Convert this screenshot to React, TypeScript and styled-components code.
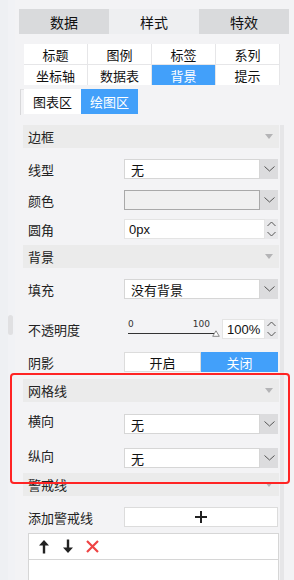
import React from 'react';
import styled, { createGlobalStyle } from 'styled-components';

const GlobalStyle = createGlobalStyle`
  html, body {
    margin: 0;
    padding: 0;
    overflow: hidden;
    background: #f3f3f5;
  }
  body {
    font-family: "Noto Sans CJK SC", "Noto Sans", sans-serif;
    font-size: 13px;
    color: #222;
  }
`;

const BLUE = '#42a0fa';

const Page = styled.div`
  position: relative;
  display: flex;
  width: 294px;
  height: 580px;
  overflow: hidden;
`;

const Gutter = styled.div`
  width: 15px;
  flex: none;
  background: linear-gradient(to right, #eef0f3 0 8px, #f1f2f5 8px);
  padding-top: 315px;
  box-sizing: border-box;
`;

const Thumb = styled.div`
  width: 5px;
  height: 20px;
  margin-left: 8px;
  border-radius: 3px;
  background: #e0e0e2;
`;

const Main = styled.div`
  flex: 1;
  padding-top: 9px;
`;

const TopTabs = styled.div`
  display: grid;
  grid-template-columns: repeat(3, 90px);
  margin-left: 4px;
  height: 25px;
`;

const TopTab = styled.div<{ $active?: boolean }>`
  display: flex;
  align-items: center;
  justify-content: center;
  font-size: 14px;
  color: #111;
  background: ${(p) => (p.$active ? '#eeeff1' : '#d9dadc')};
`;

const SubTabs = styled.div`
  display: grid;
  grid-template-columns: repeat(4, 63px);
  grid-auto-rows: 20px;
  gap: 1px;
  margin: 10px 0 0 9px;
  width: 256px;
  background: #e6e6e8;
`;

const SubTab = styled.div<{ $active?: boolean }>`
  display: flex;
  align-items: center;
  justify-content: center;
  background: ${(p) => (p.$active ? BLUE : '#fff')};
  color: ${(p) => (p.$active ? '#fff' : '#111')};
`;

const AreaTabs = styled.div`
  display: flex;
  margin: 4px 0 0 5px;
  height: 25px;
  padding-left: 3px;
  border-left: 1px solid #d8d8da;
  border-top: 1px solid #e2e2e4;
  width: 2px;
  box-sizing: content-box;
  overflow: visible;
`;

const AreaTab = styled.div<{ $active?: boolean }>`
  flex: none;
  width: 57px;
  height: 25px;
  margin-top: -1px;
  display: flex;
  align-items: center;
  justify-content: center;
  font-size: 13px;
  background: ${(p) => (p.$active ? BLUE : '#fff')};
  color: ${(p) => (p.$active ? '#fff' : '#111')};
`;

const PanelWrap = styled.div`
  display: flex;
  margin: 10px 0 0 8px;
`;

const Panel = styled.div`
  width: 256px;
  flex: none;
`;

const PanelScroll = styled.div`
  width: 4px;
  margin-left: 1px;
  height: 470px;
  background: #e6e6e8;
`;

const SectionHeader = styled.div<{ $top?: number }>`
  display: flex;
  align-items: center;
  justify-content: space-between;
  height: 23px;
  margin-top: ${(p) => p.$top ?? 0}px;
  padding: 0 5px;
  background: #ebebeb;
  color: #222;
  font-size: 13px;
`;

const Caret = styled.span`
  width: 0;
  height: 0;
  border-left: 4px solid transparent;
  border-right: 4px solid transparent;
  border-top: 5px solid #b4b4b6;
  margin-right: 1px;
`;

const Row = styled.div<{ $top: number }>`
  display: flex;
  align-items: center;
  height: 20px;
  margin-top: ${(p) => p.$top}px;
`;

const Label = styled.div<{ $raise?: number }>`
  width: 96px;
  padding-left: 5px;
  flex: none;
  font-size: 13px;
  color: #222;
  position: relative;
  top: ${(p) => -(p.$raise ?? 0)}px;
`;

const Control = styled.div`
  display: flex;
  width: 154px;
  height: 20px;
  flex: none;
`;

const SelectBox = styled.div<{ $blank?: boolean }>`
  flex: 1;
  display: flex;
  align-items: center;
  padding-left: 6px;
  box-sizing: border-box;
  background: ${(p) => (p.$blank ? '#f0f0f0' : '#fff')};
  border: 1px solid ${(p) => (p.$blank ? '#a9a9a9' : '#d6d6d6')};
  font-size: 13px;
  color: #111;
`;

const ArrowBtn = styled.div`
  width: 18px;
  flex: none;
  display: flex;
  align-items: center;
  justify-content: center;
  background: #dcdcde;
`;

const Spinner = styled.div`
  width: 13px;
  flex: none;
  display: flex;
  flex-direction: column;
  align-items: center;
  justify-content: space-between;
  padding: 2px 0 2px 0;
  box-sizing: border-box;
  background: #e8e8ea;
`;

const NumBox = styled.div<{ $width?: number }>`
  ${(p) => (p.$width ? `width: ${p.$width}px; flex: none;` : 'flex: 1;')}
  display: flex;
  align-items: center;
  padding-left: 4px;
  box-sizing: border-box;
  background: #fff;
  border: 1px solid #e4e4e4;
  font-family: "Liberation Sans", Arial, sans-serif;
  font-size: 13px;
  color: #111;
`;

const Slider = styled.div`
  width: 98px;
  flex: none;
  display: flex;
  flex-direction: column;
  padding-left: 4px;
  box-sizing: border-box;
`;

const SliderScale = styled.div`
  display: flex;
  justify-content: space-between;
  width: 82px;
  font-family: "DejaVu Sans", sans-serif;
  font-size: 9px;
  line-height: 10px;
  color: #333;
`;

const SliderTrack = styled.div`
  display: flex;
  align-items: flex-end;
  height: 8px;
`;

const SliderLine = styled.div`
  width: 86px;
  height: 1px;
  background: #333;
  margin-bottom: 3px;
`;

const Toggle = styled.div<{ $on?: boolean }>`
  flex: 1;
  display: flex;
  align-items: center;
  justify-content: center;
  font-size: 13px;
  background: ${(p) => (p.$on ? BLUE : '#fff')};
  color: ${(p) => (p.$on ? '#fff' : '#111')};
  border: 1px solid ${(p) => (p.$on ? BLUE : '#dcdcdc')};
`;

const AddBtn = styled.div`
  width: 154px;
  height: 20px;
  flex: none;
  display: flex;
  align-items: center;
  justify-content: center;
  box-sizing: border-box;
  background: #fff;
  border: 1px solid #dcdcdc;
`;

const LineTable = styled.div`
  margin: 6px 0 0 5px;
  height: 80px;
  background: #fff;
  border: 1px solid #d6d6d6;
`;

const LineToolbar = styled.div`
  display: flex;
  align-items: center;
  gap: 12px;
  height: 25px;
  padding-left: 9px;
  border-bottom: 1px solid #d6d6d6;
`;

const Highlight = styled.div`
  position: absolute;
  left: 10px;
  top: 373px;
  width: 280px;
  height: 111px;
  box-sizing: border-box;
  border: 2px solid #ff2424;
  border-radius: 4px;
  pointer-events: none;
`;

const Chevron = ({ up }: { up?: boolean }) => (
  <svg width="9" height="6" viewBox="0 0 9 6">
    <path
      d={up ? 'M0.5 5 L4.5 1 L8.5 5' : 'M0.5 1 L4.5 5 L8.5 1'}
      fill="none"
      stroke="#555"
      strokeWidth="1"
    />
  </svg>
);

const DownArrowBtn = () => (
  <ArrowBtn>
    <svg width="11" height="6" viewBox="0 0 11 6">
      <path d="M0.5 0.5 L5.5 5 L10.5 0.5" fill="none" stroke="#555" strokeWidth="1" />
    </svg>
  </ArrowBtn>
);

const Select = ({ value, blank }: { value?: string; blank?: boolean }) => (
  <Control>
    <SelectBox $blank={blank}>{value}</SelectBox>
    <DownArrowBtn />
  </Control>
);

const SpinnerBtns = () => (
  <Spinner>
    <Chevron up />
    <Chevron />
  </Spinner>
);

const App: React.FC = () => {
  return (
    <Page>
      <GlobalStyle />
      <Gutter>
        <Thumb />
      </Gutter>
      <Main>
        <TopTabs>
          <TopTab>数据</TopTab>
          <TopTab $active>样式</TopTab>
          <TopTab>特效</TopTab>
        </TopTabs>

        <SubTabs>
          <SubTab>标题</SubTab>
          <SubTab>图例</SubTab>
          <SubTab>标签</SubTab>
          <SubTab>系列</SubTab>
          <SubTab>坐标轴</SubTab>
          <SubTab>数据表</SubTab>
          <SubTab $active>背景</SubTab>
          <SubTab>提示</SubTab>
        </SubTabs>

        <AreaTabs>
          <AreaTab>图表区</AreaTab>
          <AreaTab $active>绘图区</AreaTab>
        </AreaTabs>

        <PanelWrap>
          <Panel>
            <SectionHeader>
              边框
              <Caret />
            </SectionHeader>
            <Row $top={11}>
              <Label>线型</Label>
              <Select value="无" />
            </Row>
            <Row $top={11}>
              <Label>颜色</Label>
              <Select blank />
            </Row>
            <Row $top={9}>
              <Label>圆角</Label>
              <Control>
                <NumBox>0px</NumBox>
                <SpinnerBtns />
              </Control>
            </Row>

            <SectionHeader $top={6}>
              背景
              <Caret />
            </SectionHeader>
            <Row $top={11}>
              <Label>填充</Label>
              <Select value="没有背景" />
            </Row>
            <Row $top={20}>
              <Label>不透明度</Label>
              <Control>
                <Slider>
                  <SliderScale>
                    <span>0</span>
                    <span>100</span>
                  </SliderScale>
                  <SliderTrack>
                    <SliderLine />
                    <svg width="8" height="7" viewBox="0 0 8 7" style={{ marginLeft: -2 }}>
                      <path d="M4 0.8 L7.3 6.3 L0.7 6.3 Z" fill="#fff" stroke="#888" strokeWidth="1" />
                    </svg>
                  </SliderTrack>
                </Slider>
                <NumBox $width={43}>100%</NumBox>
                <SpinnerBtns />
              </Control>
            </Row>
            <Row $top={13}>
              <Label>阴影</Label>
              <Control>
                <Toggle>开启</Toggle>
                <Toggle $on>关闭</Toggle>
              </Control>
            </Row>

            <SectionHeader $top={7}>
              网格线
              <Caret />
            </SectionHeader>
            <Row $top={12}>
              <Label $raise={4}>横向</Label>
              <Select value="无" />
            </Row>
            <Row $top={14}>
              <Label $raise={3}>纵向</Label>
              <Select value="无" />
            </Row>

            <SectionHeader $top={5}>
              警戒线
              <Caret />
            </SectionHeader>
            <Row $top={11}>
              <Label>添加警戒线</Label>
              <AddBtn>
                <svg width="12" height="12" viewBox="0 0 12 12">
                  <path d="M6 0 V12 M0 6 H12" stroke="#222" strokeWidth="2" />
                </svg>
              </AddBtn>
            </Row>
            <LineTable>
              <LineToolbar>
                <svg width="12" height="15" viewBox="0 0 12 15">
                  <path d="M6 1 L11 6.5 H7.2 V14.5 H4.8 V6.5 H1 Z" fill="#222" />
                </svg>
                <svg width="12" height="15" viewBox="0 0 12 15">
                  <path d="M6 14 L11 8.5 H7.2 V0.5 H4.8 V8.5 H1 Z" fill="#222" />
                </svg>
                <svg width="13" height="13" viewBox="0 0 13 13">
                  <path d="M1 1 L12 12 M12 1 L1 12" stroke="#ef4444" strokeWidth="2.2" />
                </svg>
              </LineToolbar>
            </LineTable>
          </Panel>
          <PanelScroll />
        </PanelWrap>
      </Main>
      <Highlight />
    </Page>
  );
};

export default App;
